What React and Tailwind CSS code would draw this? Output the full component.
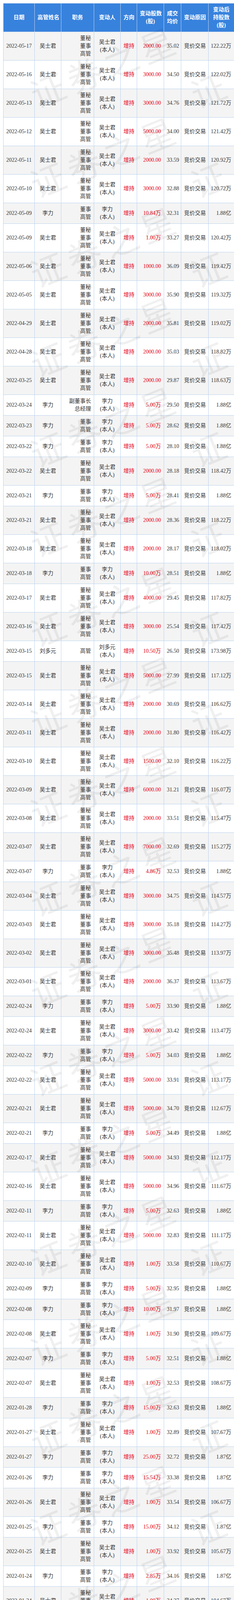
import React from 'react';

const A = ['董秘', '董事', '高管'];
const B = ['董事', '高管'];
const G = ['高管'];
const F = ['副总经理'];

// date, name, position lines, shares, avg price, holding after
const rows = [
  ['2022-05-17', '吴士君', A, '2000.00', '35.02', '122.22万'],
  ['2022-05-16', '吴士君', A, '3000.00', '34.50', '122.02万'],
  ['2022-05-13', '吴士君', A, '3000.00', '34.76', '121.72万'],
  ['2022-05-12', '吴士君', A, '5000.00', '34.00', '121.42万'],
  ['2022-05-11', '吴士君', A, '2000.00', '33.59', '120.92万'],
  ['2022-05-10', '吴士君', A, '3000.00', '32.88', '120.72万'],
  ['2022-05-09', '李力', B, '10.84万', '32.31', '1.88亿'],
  ['2022-05-09', '吴士君', A, '1.00万', '33.27', '120.42万'],
  ['2022-05-06', '吴士君', A, '1000.00', '36.09', '119.42万'],
  ['2022-05-05', '吴士君', A, '3000.00', '35.90', '119.32万'],
  ['2022-04-29', '吴士君', A, '2000.00', '35.81', '119.02万'],
  ['2022-04-28', '吴士君', A, '2000.00', '35.03', '118.82万'],
  ['2022-03-25', '吴士君', A, '2000.00', '29.87', '118.63万'],
  ['2022-03-24', '李力', ['副董事长', '总经理'], '5.00万', '29.50', '1.88亿'],
  ['2022-03-23', '李力', B, '5.00万', '28.62', '1.88亿'],
  ['2022-03-22', '李力', B, '5.00万', '28.10', '1.88亿'],
  ['2022-03-22', '吴士君', A, '2000.00', '28.18', '118.42万'],
  ['2022-03-21', '李力', B, '5.00万', '28.41', '1.88亿'],
  ['2022-03-21', '吴士君', A, '2000.00', '28.36', '118.22万'],
  ['2022-03-18', '吴士君', A, '2000.00', '28.17', '118.02万'],
  ['2022-03-18', '李力', B, '10.00万', '28.51', '1.88亿'],
  ['2022-03-17', '吴士君', A, '4000.00', '29.45', '117.82万'],
  ['2022-03-16', '吴士君', A, '3000.00', '25.54', '117.42万'],
  ['2022-03-15', '刘多元', G, '10.50万', '26.50', '173.98万'],
  ['2022-03-15', '吴士君', A, '5000.00', '27.99', '117.12万'],
  ['2022-03-14', '吴士君', A, '2000.00', '30.69', '116.62万'],
  ['2022-03-11', '吴士君', A, '2000.00', '31.80', '116.42万'],
  ['2022-03-10', '吴士君', A, '1500.00', '32.10', '116.22万'],
  ['2022-03-09', '吴士君', A, '6000.00', '31.21', '116.07万'],
  ['2022-03-08', '吴士君', A, '2000.00', '33.51', '115.47万'],
  ['2022-03-07', '吴士君', A, '7000.00', '32.69', '115.27万'],
  ['2022-03-07', '李力', B, '4.86万', '32.53', '1.88亿'],
  ['2022-03-04', '吴士君', A, '3000.00', '34.75', '114.57万'],
  ['2022-03-03', '吴士君', A, '3000.00', '35.18', '114.27万'],
  ['2022-03-02', '吴士君', A, '3000.00', '35.48', '113.97万'],
  ['2022-03-01', '吴士君', A, '2000.00', '36.37', '113.67万'],
  ['2022-02-24', '李力', B, '5.00万', '33.90', '1.88亿'],
  ['2022-02-24', '吴士君', A, '3000.00', '33.42', '113.47万'],
  ['2022-02-22', '李力', B, '5.00万', '34.03', '1.88亿'],
  ['2022-02-22', '吴士君', A, '5000.00', '33.91', '113.17万'],
  ['2022-02-21', '吴士君', A, '5000.00', '34.70', '112.67万'],
  ['2022-02-21', '李力', B, '5.00万', '34.49', '1.88亿'],
  ['2022-02-17', '吴士君', A, '5000.00', '34.93', '112.17万'],
  ['2022-02-16', '吴士君', A, '5000.00', '34.96', '111.67万'],
  ['2022-02-11', '李力', B, '5.00万', '32.63', '1.88亿'],
  ['2022-02-11', '吴士君', A, '5000.00', '32.83', '111.17万'],
  ['2022-02-10', '吴士君', A, '1.00万', '33.58', '110.67万'],
  ['2022-02-09', '李力', B, '5.00万', '32.95', '1.88亿'],
  ['2022-02-08', '李力', B, '10.00万', '31.97', '1.88亿'],
  ['2022-02-08', '吴士君', A, '1.00万', '31.90', '109.67万'],
  ['2022-02-07', '李力', B, '5.00万', '32.51', '1.88亿'],
  ['2022-02-07', '吴士君', A, '1.00万', '32.53', '108.67万'],
  ['2022-01-28', '李力', B, '15.00万', '32.63', '1.88亿'],
  ['2022-01-27', '吴士君', A, '1.00万', '32.89', '107.67万'],
  ['2022-01-27', '李力', B, '25.00万', '32.72', '1.87亿'],
  ['2022-01-26', '李力', B, '15.54万', '33.38', '1.87亿'],
  ['2022-01-26', '吴士君', A, '1.00万', '33.54', '106.67万'],
  ['2022-01-25', '李力', B, '15.00万', '34.12', '1.87亿'],
  ['2022-01-25', '吴士君', A, '1.00万', '33.92', '105.67万'],
  ['2022-01-24', '李力', B, '2.85万', '34.16', '1.87亿'],
  ['2022-01-24', '吴士君', A, '1.00万', '34.27', '104.67万'],
  ['2022-01-21', '吴士君', A, '2.00万', '34.70', '103.67万'],
  ['2022-01-21', '李力', B, '27.15万', '34.12', '1.87亿'],
  ['2022-01-20', '李力', B, '10.00万', '35.31', '1.87亿'],
  ['2022-01-20', '吴士君', A, '1.00万', '35.66', '101.67万'],
  ['2022-01-19', '吴士君', A, '2.00万', '35.58', '100.67万'],
  ['2022-01-18', '吴士君', A, '2.00万', '36.15', '98.67万'],
  ['2022-01-17', '吴士君', A, '3.00万', '35.16', '96.67万'],
  ['2022-01-14', '冯珺', F, '3.00万', '35.80', '58.20万'],
  ['2022-01-14', '李力', B, '20.00万', '35.56', '1.86亿'],
  ['2022-01-14', '唐仕波', F, '2.00万', '35.65', '91.97万'],
  ['2022-01-13', '吴士君', A, '5.00万', '36.18', '93.67万'],
  ['2022-01-13', '唐仕波', F, '5.50万', '36.45', '89.97万'],
  ['2022-01-13', '王丽华', G, '13.43万', '37.31', '122.95万'],
  ['2022-01-12', '李力', B, '30.00万', '36.93', '1.86亿'],
  ['2022-01-12', '吴士君', A, '5.00万', '37.00', '88.67万'],
  ['2022-01-11', '刘多元', G, '4.70万', '36.56', '163.48万'],
  ['2022-01-11', '吴士君', A, '1.00万', '36.30', '83.67万'],
  ['2022-01-06', '刘多元', ['副总经理', '财务总监'], '10.28万', '38.97', '158.79万'],
  ['2022-01-06', '吴士君', ['董事', '副总经理', '董事会秘书'], '5.00万', '39.09', '82.68万'],
];

const headers = [
  ['日期'],
  ['高管姓名'],
  ['职务'],
  ['变动人'],
  ['方向'],
  ['变动股数', '(股)'],
  ['成交', '均价'],
  ['变动原因'],
  ['变动后', '持股数', '(股)'],
];

const widths = ['w-[80px]', 'w-[68px]', 'w-[84px]', 'w-[68px]', 'w-[42px]', 'w-[69px]', 'w-[44px]', 'w-[70px]', 'w-[66px]'];

function Lines({ items }) {
  return items.map((t, i) => (
    <React.Fragment key={i}>
      {i > 0 && <br />}
      {t}
    </React.Fragment>
  ));
}

// watermark "证券之星", one glyph at a time along a -22deg baseline,
// kept inside the frame
const WM = '证券之星';
const marks = [];
const inFrame = (y) => y > 60 && y < 5268;
for (let k = -1; k < 23; k++) {
  const cy = 400 + k * 230;
  WM.split('').forEach((ch, j) => {
    const t = (j - 1.5) * 101;
    const y = cy - t * 0.375;
    if (inFrame(y)) marks.push({ ch, x: 261 + t * 0.927, y });
  });
  // first glyph of the next tile, cut by the right edge
  if (inFrame(cy + 57)) marks.push({ ch: '证', x: 532, y: cy + 57 });
}

export default function App() {
  const cell = 'border border-[#bcd3ec] px-[7px] py-[6px] align-middle whitespace-nowrap';

  return (
    <div className="relative w-[599px] h-[5330px] bg-white overflow-hidden pt-2 pl-2 text-[14px] leading-5 text-[#333] font-[family-name:'Liberation_Serif','Noto_Sans_CJK_SC',serif]">
      <table className="table-fixed border-collapse w-[591px]">
        <colgroup>
          {widths.map((w, i) => (
            <col key={i} className={w} />
          ))}
        </colgroup>
        <thead>
          <tr className="bg-[#3782dd]">
            {headers.map((h, i) => (
              <th key={i} className={`${cell} border-[#a9c8ee] text-white font-bold text-center`}>
                <Lines items={h} />
              </th>
            ))}
          </tr>
        </thead>
        <tbody>
          {rows.map((r, i) => (
            <tr key={i} className={i % 2 === 0 ? 'bg-[#f4f4f4]' : 'bg-white'}>
              <td className={`${cell} text-center`}>{r[0]}</td>
              <td className={`${cell} text-center`}>{r[1]}</td>
              <td className={`${cell} text-right`}>
                <Lines items={r[2]} />
              </td>
              <td className={`${cell} text-center`}>
                {r[1]}
                <br />
                (本人)
              </td>
              <td className={`${cell} text-center px-0 text-[#e60012]`}>增持</td>
              <td className={`${cell} text-right text-[#e60012]`}>{r[3]}</td>
              <td className={`${cell} text-center px-0`}>{r[4]}</td>
              <td className={`${cell} text-center px-0`}>竞价交易</td>
              <td className={`${cell} text-right pl-0`}>{r[5]}</td>
            </tr>
          ))}
        </tbody>
      </table>

      {/* watermark */}
      <div className="pointer-events-none absolute inset-0 overflow-hidden">
        {marks.map((m, i) => (
          <span
            key={i}
            className="absolute -translate-x-1/2 -translate-y-1/2 -rotate-[22deg] text-[88px] leading-none text-black/[0.06] font-[family-name:'Noto_Sans_CJK_SC',sans-serif]"
            style={{ left: m.x, top: m.y }}
          >
            {m.ch}
          </span>
        ))}
      </div>
    </div>
  );
}
